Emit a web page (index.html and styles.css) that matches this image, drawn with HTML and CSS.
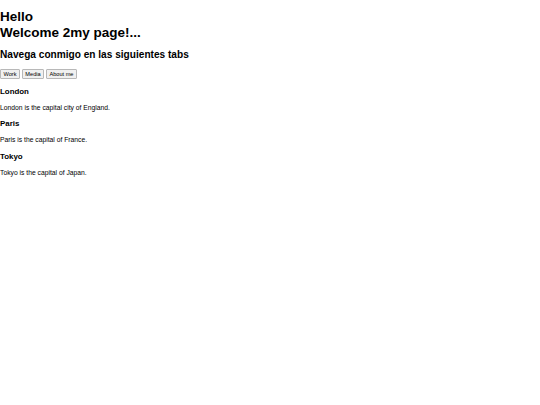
FILE: index.html
```html
<!DOCTYPE html>
<html lang="es">
<head>
<meta charset="utf-8">
<title>Hello</title>
<link rel="stylesheet" href="styles.css">
</head>
<body>
<h1 class="title">Hello<br>Welcome 2my page!...</h1>
<h2 class="subtitle">Navega conmigo en las siguientes tabs</h2>
<div class="tabs">
  <button class="tab-btn">Work</button>
  <button class="tab-btn">Media</button>
  <button class="tab-btn">About me</button>
</div>
<div class="tab-content">
  <h3 class="city">London</h3>
  <p class="desc">London is the capital city of England.</p>
</div>
<div class="tab-content">
  <h3 class="city">Paris</h3>
  <p class="desc">Paris is the capital of France.</p>
</div>
<div class="tab-content">
  <h3 class="city">Tokyo</h3>
  <p class="desc">Tokyo is the capital of Japan.</p>
</div>
</body>
</html>
```

FILE: styles.css
```css
html, body {
  background: #ffffff;
}
body {
  margin: 0;
  font-family: "Liberation Sans", Arial, sans-serif;
  font-size: 6.75px;
  line-height: 7.6px;
  color: #000000;
}
.title {
  font-size: 13.5px;
  line-height: 15.6px;
  margin: 9.05px 0;
  font-weight: bold;
}
.subtitle {
  font-size: 10.125px;
  line-height: 11.8px;
  margin: 8.4px 0;
  font-weight: bold;
}
.tabs {
  display: flex;
  gap: 1.8px;
  align-items: flex-start;
}
.tab-btn {
  font-family: "Liberation Sans", Arial, sans-serif;
  font-size: 5.625px;
  line-height: 6.33px;
  padding: 0.42px 2.53px;
  border: 1px solid #b8b8b8;
  border-radius: 1px;
  background: #f0f0f0;
  color: #000000;
  margin: 0;
}
.city {
  font-size: 7.9px;
  line-height: 9.28px;
  margin: 7.9px 0;
  font-weight: bold;
}
.desc {
  font-size: 6.75px;
  line-height: 7.6px;
  margin: 6.75px 0;
}
```
